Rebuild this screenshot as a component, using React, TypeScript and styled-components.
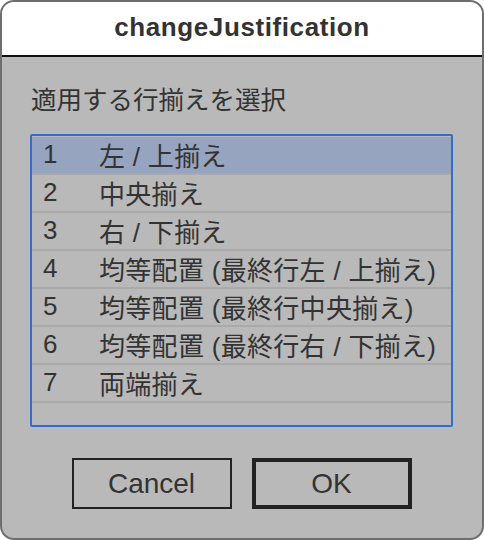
import React from "react";
import styled, { createGlobalStyle } from "styled-components";

const Global = createGlobalStyle`
  html, body { margin: 0; padding: 0; background: #ffffff; }
  body { font-family: "Liberation Sans", "Noto Sans CJK JP", sans-serif; }
  * { box-sizing: border-box; }
`;

const Window = styled.div`
  width: 484px;
  height: 540px;
  border: 2px solid #6e6e6e;
  border-radius: 14px;
  overflow: hidden;
  display: flex;
  flex-direction: column;
  background: #b9b9b9;
`;

const TitleBar = styled.div`
  height: 55px;
  flex: none;
  background: #ffffff;
  border-bottom: 2px solid #111111;
  display: flex;
  align-items: center;
  justify-content: center;
  padding-bottom: 2px;
`;

const Title = styled.h1`
  margin: 0;
  font-family: "Liberation Sans", sans-serif;
  font-weight: 700;
  font-size: 26px;
  letter-spacing: 0.6px;
  color: #333333;
`;

const Body = styled.div`
  flex: 1;
  display: flex;
  flex-direction: column;
  padding: 0 29px 0 28px;
`;

const Label = styled.div`
  font-family: "Noto Sans CJK JP", sans-serif;
  font-size: 25.5px;
  line-height: 36px;
  color: #333333;
  margin-top: 23px;
  padding-left: 1px;
  height: 36px;
`;

const List = styled.div`
  margin-top: 18px;
  height: 293px;
  border: 2px solid #2f6cd6;
  border-radius: 2px;
  padding-top: 1px;
  display: flex;
  flex-direction: column;
`;

const Row = styled.div<{ $selected?: boolean }>`
  height: 38px;
  flex: none;
  display: flex;
  align-items: center;
  padding-left: 11px;
  padding-bottom: 1px;
  background: ${(p) => (p.$selected ? "#96a4bf" : "transparent")};
  border-bottom: 2px solid #aaaaaa;
  font-family: "Liberation Sans", "Noto Sans CJK JP", sans-serif;
  font-size: 26px;
  color: #333333;
  white-space: nowrap;
`;

const Num = styled.span`
  width: 56px;
  flex: none;
`;

const Text = styled.span`
  letter-spacing: 0.3px;
`;

const Buttons = styled.div`
  display: flex;
  justify-content: center;
  gap: 20px;
  margin-top: 31px;
`;

const Button = styled.button<{ $default?: boolean }>`
  width: 160px;
  height: 51px;
  background: transparent;
  border: ${(p) => (p.$default ? "4px" : "2px")} solid #222222;
  font-family: "Liberation Sans", sans-serif;
  font-size: 28px;
  color: #333333;
  padding: 0;
  display: flex;
  align-items: center;
  justify-content: center;
`;

const items = [
  "左 / 上揃え",
  "中央揃え",
  "右 / 下揃え",
  "均等配置 (最終行左 / 上揃え)",
  "均等配置 (最終行中央揃え)",
  "均等配置 (最終行右 / 下揃え)",
  "両端揃え",
];

export default function App() {
  return (
    <>
      <Global />
      <Window>
        <TitleBar>
          <Title>changeJustification</Title>
        </TitleBar>
        <Body>
          <Label>適用する行揃えを選択</Label>
          <List>
            {items.map((t, i) => (
              <Row key={i} $selected={i === 0}>
                <Num>{i + 1}</Num>
                <Text>{t}</Text>
              </Row>
            ))}
          </List>
          <Buttons>
            <Button>Cancel</Button>
            <Button $default>OK</Button>
          </Buttons>
        </Body>
      </Window>
    </>
  );
}
